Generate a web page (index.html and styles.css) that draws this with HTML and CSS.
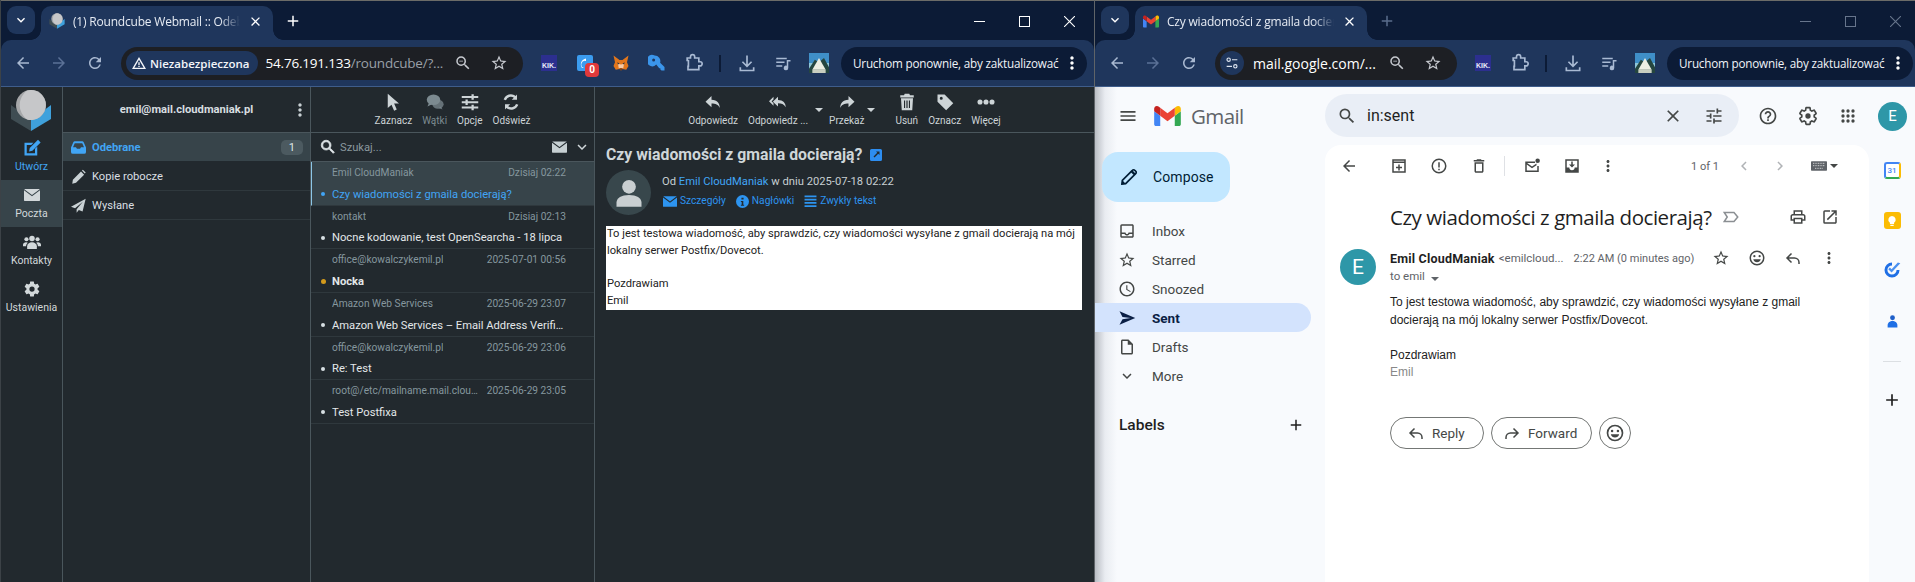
FILE: index.html
```html
<!DOCTYPE html>
<html lang="pl">
<head>
<meta charset="utf-8">
<title>Roundcube i Gmail</title>
<link rel="stylesheet" href="styles.css">
</head>
<body>
<svg class="defs" xmlns="http://www.w3.org/2000/svg">
  <symbol id="i-back" viewBox="0 0 24 24"><path d="M20 11H7.83l5.59-5.59L12 4l-8 8 8 8 1.41-1.41L7.83 13H20v-2z"/></symbol>
  <symbol id="i-fwd" viewBox="0 0 24 24"><path d="M4 11h12.17l-5.59-5.59L12 4l8 8-8 8-1.41-1.41L16.17 13H4v-2z"/></symbol>
  <symbol id="i-reload" viewBox="0 0 24 24"><path d="M17.65 6.35A7.958 7.958 0 0 0 12 4c-4.42 0-7.99 3.58-7.99 8s3.57 8 7.99 8c3.73 0 6.84-2.55 7.73-6h-2.08A5.99 5.99 0 0 1 12 18c-3.31 0-6-2.69-6-6s2.69-6 6-6c1.66 0 3.14.69 4.22 1.78L13 11h7V4l-2.35 2.35z"/></symbol>
  <symbol id="i-zoom" viewBox="0 0 24 24"><path d="M15.5 14h-.79l-.28-.27A6.471 6.471 0 0 0 16 9.5 6.5 6.5 0 1 0 9.5 16c1.61 0 3.09-.59 4.23-1.57l.27.28v.79l5 4.99L20.49 19l-4.99-5zm-6 0C7.01 14 5 11.99 5 9.5S7.01 5 9.5 5 14 7.01 14 9.5 11.99 14 9.5 14z"/><path d="M7 9h5v1H7z"/></symbol>
  <symbol id="i-search" viewBox="0 0 24 24"><path d="M15.5 14h-.79l-.28-.27A6.471 6.471 0 0 0 16 9.5 6.5 6.5 0 1 0 9.5 16c1.61 0 3.09-.59 4.23-1.57l.27.28v.79l5 4.99L20.49 19l-4.99-5zm-6 0C7.01 14 5 11.99 5 9.5S7.01 5 9.5 5 14 7.01 14 9.5 11.99 14 9.5 14z"/></symbol>
  <symbol id="i-star" viewBox="0 0 24 24"><path d="M22 9.24l-7.19-.62L12 2 9.19 8.63 2 9.24l5.46 4.73L5.82 21 12 17.27 18.18 21l-1.63-7.03L22 9.24zM12 15.4l-3.76 2.27 1-4.28-3.32-2.88 4.38-.38L12 6.1l1.71 4.04 4.38.38-3.32 2.88 1 4.28L12 15.4z"/></symbol>
  <symbol id="i-close" viewBox="0 0 24 24"><path d="M19 6.41 17.59 5 12 10.59 6.41 5 5 6.41 10.59 12 5 17.59 6.41 19 12 13.41 17.59 19 19 17.59 13.41 12z"/></symbol>
  <symbol id="i-more" viewBox="0 0 24 24"><path d="M12 8c1.1 0 2-.9 2-2s-.9-2-2-2-2 .9-2 2 .9 2 2 2zm0 2c-1.1 0-2 .9-2 2s.9 2 2 2 2-.9 2-2-.9-2-2-2zm0 6c-1.1 0-2 .9-2 2s.9 2 2 2 2-.9 2-2-.9-2-2-2z"/></symbol>
  <symbol id="i-chev" viewBox="0 0 24 24"><path d="M16.59 8.59 12 13.17 7.41 8.59 6 10l6 6 6-6z"/></symbol>
  <symbol id="i-add" viewBox="0 0 24 24"><path d="M19 13h-6v6h-2v-6H5v-2h6V5h2v6h6v2z"/></symbol>
  <symbol id="i-warn" viewBox="0 0 24 24"><path d="M12 3 1.5 21h21L12 3zm0 4 7 12H5l7-12zm-1 4v4h2v-4h-2zm0 5v2h2v-2h-2z"/></symbol>
  <symbol id="i-tunechip" viewBox="0 0 24 24"><circle cx="7" cy="7" r="2.500" fill="none" stroke="currentColor" stroke-width="1.700"/><path d="M12 6.200h8v1.700h-8zM4 16.200h8v1.700H4z"/><circle cx="17" cy="17" r="2.500" fill="none" stroke="currentColor" stroke-width="1.700"/></symbol>
  <symbol id="i-puzzle" viewBox="0 0 24 24"><path fill="none" stroke="currentColor" stroke-width="2" d="M5 6h4V4.500a2.500 2.500 0 0 1 5 0V6h5v4.500h1.500a2.500 2.500 0 0 1 0 5H19V20H6v-4h0.500l0-7H5z"/></symbol>
  <symbol id="i-download" viewBox="0 0 24 24"><path fill="none" stroke="currentColor" stroke-width="2" d="M12 3v13M6.500 10.500 12 16l5.500-5.500M4 17v4h16v-4"/></symbol>
  <symbol id="i-queue" viewBox="0 0 24 24"><path d="M3 5h14v2H3zM3 10h11v2H3zM3 15h8v2H3z"/><path d="M17 8h5v2h-3v8.500a3 3 0 1 1-2-2.800z"/></symbol>
  <symbol id="i-avatar" viewBox="0 0 24 24"><clipPath id="c-av"><circle cx="12" cy="12" r="12"/></clipPath><g clip-path="url(#c-av)"><rect width="24" height="24" fill="#3f8fc8"/><path d="M0 12h24v12H0z" fill="#8fc6d8"/><path d="M0 19 7 8l5 3 6-5 6 11v7H0z" fill="#25463f"/><path d="M12 6 20 20H4z" fill="#eceee2"/><path d="M4 20h16v4H4z" fill="#c9cfc0"/></g></symbol>
  <symbol id="i-fox" viewBox="0 0 24 24"><path d="M2 2 10 8h4l8-6-2 9 2 5-3 5-5-1-2 2-2-2-5 1-3-5 2-5z" fill="#e2761b"/><path d="M8 13 12 14l4-1-1 6h-6z" fill="#f6c9a5"/><path d="M7 11l3 1.500-2 1.500zM17 11l-3 1.500 2 1.500z" fill="#233447"/><path d="M10 19h4l-1 2.500h-2z" fill="#763d16"/></symbol>
  <symbol id="i-key" viewBox="0 0 24 24"><path fill-rule="evenodd" d="M9 2a7.500 7.500 0 0 1 7.200 9.500L22 17.300V22h-4l-1.500-1.500V19h-1.500l-4-5A7.500 7.500 0 1 1 9 2zM7.500 6a2 2 0 1 0 0 4 2 2 0 0 0 0-4z" fill="#3b95ea"/></symbol>
  <symbol id="r-reply" viewBox="0 0 24 24"><path d="M10 9V4L2 11.500 10 19v-5c5.500 0 9 1.500 11 6 0-6-3-11-11-11z"/></symbol>
  <symbol id="r-replyall" viewBox="0 0 28 24"><path d="M7 8V4L0 11l7 7v-4l-3-3zM14 9V4L6 11.500 14 19v-5c5.500 0 9 1.500 12 6 0-6-4-11-12-11z"/></symbol>
  <symbol id="r-fwd" viewBox="0 0 24 24"><path d="M14 9V4l8 7.500L14 19v-5C8.500 14 5 15.500 3 20c0-6 3-11 11-11z"/></symbol>
  <symbol id="r-trash" viewBox="0 0 24 24"><path d="M9 1h6l1 2h5v3H3V3h5zM4 7h16l-1 16H5zm4 3v10h1.500V10zm3.200 0v10h1.600V10zm3.300 0v10H16V10z"/></symbol>
  <symbol id="r-tag" viewBox="0 0 24 24"><path d="M2 2h9.500L23 13.500 13.500 23 2 11.500zM7 5a2 2 0 1 0 0 4 2 2 0 0 0 0-4z"/></symbol>
  <symbol id="r-dots" viewBox="0 0 24 24"><circle cx="4" cy="12" r="3.400"/><circle cx="12" cy="12" r="3.400"/><circle cx="20" cy="12" r="3.400"/></symbol>
  <symbol id="r-pointer" viewBox="0 0 24 24"><path d="M5 1v19l5-4.500 3.500 8 3.500-1.500-3.500-8H20z"/></symbol>
  <symbol id="r-chat" viewBox="0 0 24 24"><ellipse cx="10" cy="9" rx="9" ry="7"/><path d="M4 13 2 18l6-3z"/><ellipse cx="16" cy="15" rx="7.500" ry="6" opacity=".75"/><path d="M20 18l2 4-5-2z" opacity=".75"/></symbol>
  <symbol id="r-sliders" viewBox="0 0 24 24"><path d="M1 4h22v2.500H1zM1 11h22v2.500H1zM1 18h22v2.500H1z"/><path d="M14 1.500h3v7.500h-3zM6 8.500h3V16H6zM14 15.500h3V23h-3z"/></symbol>
  <symbol id="r-sync" viewBox="0 0 24 24"><path d="M20 2v7h-7l2.800-2.800A7 7 0 0 0 5.300 9.500L2.200 8.500a10.300 10.300 0 0 1 16-4.600zM4 22v-7h7l-2.800 2.800a7 7 0 0 0 10.500-3.300l3.100 1a10.300 10.300 0 0 1-16 4.600z"/></symbol>
  <symbol id="r-compose" viewBox="0 0 24 24"><path d="M2 5h12l-3 3H5v11h11v-6l3-3v12H2z"/><path d="M9 12 20 1l3.500 3.500-11 11L8 16.500z"/></symbol>
  <symbol id="r-mail" viewBox="0 0 24 18"><path d="M1 0h22a1 1 0 0 1 .6.200L12 9 .4.200A1 1 0 0 1 1 0z"/><path d="M0 2v15a1 1 0 0 0 1 1h22a1 1 0 0 0 1-1V2L12 11z"/></symbol>
  <symbol id="r-people" viewBox="0 0 26 20"><circle cx="13" cy="5" r="4"/><circle cx="5" cy="6" r="3"/><circle cx="21" cy="6" r="3"/><path d="M6 20v-4c0-3 3-5.500 7-5.500s7 2.500 7 5.500v4z"/><path d="M0 16v-2c0-2 2-3.500 4.500-3.500 1 0 2 .3 2.500.7C5.500 12.500 4.500 14 4.500 16zM26 16v-2c0-2-2-3.500-4.500-3.500-1 0-2 .3-2.500.7 1.500 1.300 2.500 2.800 2.500 4.800z"/></symbol>
  <symbol id="r-gear" viewBox="0 0 24 24"><path fill-rule="evenodd" d="M19.430 12.980c.04-.32.07-.64.07-.98s-.03-.66-.07-.98l2.110-1.650c.19-.15.24-.42.12-.64l-2-3.460c-.12-.22-.39-.3-.61-.22l-2.490 1c-.52-.4-1.080-.73-1.690-.98l-.38-2.650A.49.49 0 0 0 14 2h-4c-.25 0-.46.18-.49.42l-.38 2.650c-.61.25-1.170.59-1.690.98l-2.490-1c-.23-.09-.49 0-.61.22l-2 3.460c-.13.22-.07.49.12.64l2.110 1.650c-.04.32-.07.65-.07.98s.03.66.07.98l-2.110 1.650c-.19.15-.24.42-.12.64l2 3.460c.12.22.39.3.61.22l2.490-1c.52.4 1.080.73 1.690.98l.38 2.650c.03.24.24.42.49.42h4c.25 0 .46-.18.49-.42l.38-2.650c.61-.25 1.170-.59 1.690-.98l2.490 1c.23.09.49 0 .61-.22l2-3.460c.12-.22.07-.49-.12-.64zM12 15.500a3.500 3.500 0 1 1 0-7 3.500 3.500 0 0 1 0 7z"/></symbol>
  <symbol id="r-inbox" viewBox="0 0 24 20"><path d="M6 0h12c1 0 1.800.5 2.300 1.400L24 10v7a3 3 0 0 1-3 3H3a3 3 0 0 1-3-3v-7l3.700-8.600C4.200.5 5 0 6 0zm0 3-2.800 6.500H8l1.500 2.500h5L16 9.500h4.800L18 3z" fill-rule="evenodd"/></symbol>
  <symbol id="r-pencil" viewBox="0 0 24 24"><path d="M3 17 16 4l5 5L8 22l-6 1.500zM17.500 2.500 19 1l4.500 4.500L22 7z"/></symbol>
  <symbol id="r-plane" viewBox="0 0 24 24"><path d="M23.500 1 0 14l6.500 2.500L19 6 9 18v5.500l3.500-4.500 6 2.500z"/></symbol>
  <symbol id="r-person" viewBox="0 0 24 24"><circle cx="12" cy="7" r="5.500"/><path d="M2 23v-3.500C2 16 6 13.500 12 13.500s10 2.500 10 6V23z"/></symbol>
  <symbol id="r-info" viewBox="0 0 24 24"><path fill-rule="evenodd" d="M12 0a12 12 0 1 1 0 24 12 12 0 0 1 0-24zm-2 5v3.500h4V5zm-1 6v2h1.500v5H9v2h6v-2h-1.500v-7z"/></symbol>
  <symbol id="r-lines" viewBox="0 0 24 24"><path d="M1 1h22v3H1zM1 7h22v3H1zM1 13h22v3H1zM1 19h22v3H1z"/></symbol>
  <symbol id="r-ext" viewBox="0 0 24 24"><path fill-rule="evenodd" d="M3 0h18a3 3 0 0 1 3 3v18a3 3 0 0 1-3 3H3a3 3 0 0 1-3-3V3a3 3 0 0 1 3-3zm9 5 2.500 2.500L7 15l2 2 7.500-7.500L19 12V5z"/></symbol>
  <symbol id="g-menu" viewBox="0 0 24 24"><path d="M3 18h18v-2H3v2zm0-5h18v-2H3v2zm0-7v2h18V6H3z"/></symbol>
  <symbol id="g-tune" viewBox="0 0 24 24"><path d="M3 17v2h6v-2H3zM3 5v2h10V5H3zm10 16v-2h8v-2h-8v-2h-2v6h2zM7 9v2H3v2h4v2h2V9H7zm14 4v-2H11v2h10zm-6-4h2V7h4V5h-4V3h-2v6z"/></symbol>
  <symbol id="g-help" viewBox="0 0 24 24"><path d="M11 18h2v-2h-2v2zm1-16C6.480 2 2 6.480 2 12s4.480 10 10 10 10-4.480 10-10S17.520 2 12 2zm0 18c-4.410 0-8-3.590-8-8s3.590-8 8-8 8 3.590 8 8-3.590 8-8 8zm0-14c-2.210 0-4 1.790-4 4h2c0-1.100.9-2 2-2s2 .9 2 2c0 2-3 1.750-3 5h2c0-2.250 3-2.500 3-5 0-2.210-1.790-4-4-4z"/></symbol>
  <symbol id="g-gear" viewBox="0 0 24 24"><path fill="none" stroke="currentColor" stroke-width="2" d="M19.430 12.980c.04-.32.07-.64.07-.98s-.03-.66-.07-.98l2.110-1.650c.19-.15.24-.42.12-.64l-2-3.460c-.12-.22-.39-.3-.61-.22l-2.490 1c-.52-.4-1.080-.73-1.690-.98l-.38-2.650A.49.49 0 0 0 14 2h-4c-.25 0-.46.18-.49.42l-.38 2.650c-.61.25-1.170.59-1.690.98l-2.490-1c-.23-.09-.49 0-.61.22l-2 3.460c-.13.22-.07.49.12.64l2.110 1.650c-.04.32-.07.65-.07.98s.03.66.07.98l-2.110 1.650c-.19.15-.24.42-.12.64l2 3.460c.12.22.39.3.61.22l2.490-1c.52.4 1.080.73 1.690.98l.38 2.650c.03.24.24.42.49.42h4c.25 0 .46-.18.49-.42l.38-2.650c.61-.25 1.170-.59 1.690-.98l2.490 1c.23.09.49 0 .61-.22l2-3.460c.12-.22.07-.49-.12-.64z"/><circle cx="12" cy="12" r="3.200"/></symbol>
  <symbol id="g-grid" viewBox="0 0 24 24"><path d="M6 8a2 2 0 1 0 0-4 2 2 0 0 0 0 4zm6 12a2 2 0 1 0 0-4 2 2 0 0 0 0 4zm-6 0a2 2 0 1 0 0-4 2 2 0 0 0 0 4zm0-6a2 2 0 1 0 0-4 2 2 0 0 0 0 4zm6 0a2 2 0 1 0 0-4 2 2 0 0 0 0 4zm4-8a2 2 0 1 0 4 0 2 2 0 0 0-4 0zm-4 2a2 2 0 1 0 0-4 2 2 0 0 0 0 4zm6 6a2 2 0 1 0 0-4 2 2 0 0 0 0 4zm0 6a2 2 0 1 0 0-4 2 2 0 0 0 0 4z"/></symbol>
  <symbol id="g-edit" viewBox="0 0 24 24"><path fill="none" stroke="currentColor" stroke-width="2" d="M3.500 20.500 4 16 16 4a2 2 0 0 1 3 0l1 1a2 2 0 0 1 0 3L8 20z"/><path d="M14 6l4 4 2-2-4-4z"/><path d="M3 21l1-5 4 4z"/></symbol>
  <symbol id="g-inbox" viewBox="0 0 24 24"><path d="M19 3H5a2 2 0 0 0-2 2v14c0 1.100.9 2 2 2h14c1.100 0 2-.9 2-2V5c0-1.100-.9-2-2-2zm0 16H5v-3h3.560c.69 1.190 1.970 2 3.450 2s2.750-.81 3.450-2H19v3zm0-5h-4.990c0 1.100-.9 2-2 2s-2-.9-2-2H5V5h14v9z"/></symbol>
  <symbol id="g-clock" viewBox="0 0 24 24"><path d="M11.990 2C6.470 2 2 6.480 2 12s4.470 10 9.990 10C17.520 22 22 17.520 22 12S17.520 2 11.990 2zM12 20c-4.420 0-8-3.580-8-8s3.580-8 8-8 8 3.580 8 8-3.580 8-8 8zm.5-13H11v6l5.250 3.150.75-1.230-4.500-2.670z"/></symbol>
  <symbol id="g-send" viewBox="0 0 24 24"><path d="M2.010 21 23 12 2.010 3 6 10.500 17 12 6 13.500z"/></symbol>
  <symbol id="g-draft" viewBox="0 0 24 24"><path d="M14 2H6c-1.100 0-2 .9-2 2v16c0 1.100.9 2 2 2h12c1.100 0 2-.9 2-2V8l-6-6zm4 18H6V4h7v5h5v11z"/></symbol>
  <symbol id="g-archive" viewBox="0 0 24 24"><path d="M3 3h18v18H3zm2 5v11h14V8zm0-3v1h14V5zm6 5h2v3h3v2h-3v3h-2v-3H8v-2h3z" fill-rule="evenodd"/></symbol>
  <symbol id="g-spam" viewBox="0 0 24 24"><path d="M12 2a10 10 0 1 1 0 20 10 10 0 0 1 0-20zm0 2a8 8 0 1 0 0 16 8 8 0 0 0 0-16zm-1 3h2v7h-2zm0 8.500h2v2h-2z" fill-rule="evenodd"/></symbol>
  <symbol id="g-delete" viewBox="0 0 24 24"><path d="M6 19c0 1.100.9 2 2 2h8c1.100 0 2-.9 2-2V7H6v12zM8 9h8v10H8V9zm7.500-5-1-1h-5l-1 1H5v2h14V4h-3.500z"/></symbol>
  <symbol id="g-unread" viewBox="0 0 24 24"><path d="M3 6h13v2H5.500l6.500 4.500 6-4v2.400l-6 4-7-4.800V18h14v-6h2v8H3z"/><circle cx="19.500" cy="5" r="3"/></symbol>
  <symbol id="g-move" viewBox="0 0 24 24"><path d="M3 3h18v18H3zm2 2v9h3.500a3.500 3.500 0 0 0 7 0H19V5zm6 1h2v4h3l-4 4-4-4h3z" fill-rule="evenodd"/></symbol>
  <symbol id="g-left" viewBox="0 0 24 24"><path d="M15.410 7.410 14 6l-6 6 6 6 1.410-1.410L10.830 12z"/></symbol>
  <symbol id="g-right" viewBox="0 0 24 24"><path d="M8.590 16.590 10 18l6-6-6-6-1.410 1.410L13.170 12z"/></symbol>
  <symbol id="g-kbd" viewBox="0 0 24 14"><path d="M1 0h22a1 1 0 0 1 1 1v12a1 1 0 0 1-1 1H1a1 1 0 0 1-1-1V1a1 1 0 0 1 1-1z"/><path d="M3 3h18M3 6.500h18M6 10.500h12" stroke="#ffffff" stroke-width="1" stroke-dasharray="1.500 1"/></symbol>
  <symbol id="g-label" viewBox="0 0 24 24"><path fill="none" stroke="currentColor" stroke-width="2" d="M3 6h13l5 6-5 6H3l4-6z"/></symbol>
  <symbol id="g-print" viewBox="0 0 24 24"><path d="M19 8h-1V3H6v5H5c-1.660 0-3 1.340-3 3v6h4v4h12v-4h4v-6c0-1.660-1.340-3-3-3zM8 5h8v3H8V5zm8 12v2H8v-4h8v2zm2-2v-2H6v2H4v-4c0-.55.45-1 1-1h14c.55 0 1 .45 1 1v4h-2z"/></symbol>
  <symbol id="g-open" viewBox="0 0 24 24"><path d="M19 19H5V5h7V3H5a2 2 0 0 0-2 2v14a2 2 0 0 0 2 2h14c1.100 0 2-.9 2-2v-7h-2v7zM14 3v2h3.590l-9.830 9.830 1.410 1.410L19 6.410V10h2V3h-7z"/></symbol>
  <symbol id="g-smile" viewBox="0 0 24 24"><path fill-rule="evenodd" d="M12 2a10 10 0 1 1 0 20 10 10 0 0 1 0-20zm0 2a8 8 0 1 0 0 16 8 8 0 0 0 0-16zM8.500 8a1.500 1.500 0 1 1 0 3 1.500 1.500 0 0 1 0-3zm7 0a1.500 1.500 0 1 1 0 3 1.500 1.500 0 0 1 0-3zM7 13.500h10c-.6 2.500-2.600 4-5 4s-4.400-1.500-5-4z"/></symbol>
  <symbol id="g-reply" viewBox="0 0 24 24"><path fill="none" stroke="currentColor" stroke-width="2" d="M10 6 4 12l6 6M4.500 12H14a6 6 0 0 1 6 6v2"/></symbol>
  <symbol id="g-forward" viewBox="0 0 24 24"><path fill="none" stroke="currentColor" stroke-width="2" d="M14 6l6 6-6 6M19.500 12H10a6 6 0 0 0-6 6v2"/></symbol>
  <symbol id="rc-mark" viewBox="0 0 42 41"><path d="M1 15 21 30V41L1 29z" fill="#3f4d53"/><path d="M41 15 21 30V41L41 29z" fill="#3fa1dc"/><circle cx="21" cy="15" r="15" fill="#a5a7a9"/><path d="M17 .5A15 15 0 1 1 17 29.500 18 18 0 0 1 17 .5z" fill="#c6c7c9"/></symbol>
</svg>

<div class="desk">
  <section class="win win-left">
    <header class="chrome">
      <div class="tabstrip">
        <button class="tabsearch"><svg class="ic12"><use href="#i-chev"/></svg></button>
        <div class="tab">
          <svg class="favicon"><use href="#rc-mark"/></svg>
          <span class="tab-title">(1) Roundcube Webmail :: Odebrane</span>
          <svg class="ic14 tab-x"><use href="#i-close"/></svg>
        </div>
        <svg class="ic18 newtab"><use href="#i-add"/></svg>
        <div class="winctl">
          <span class="wc-min"></span><span class="wc-max"></span><svg class="wc-x" viewBox="0 0 10 10"><path d="M0 0l10 10M10 0 0 10"/></svg>
        </div>
      </div>
      <div class="toolbar">
        <span class="navbtn"><svg class="ic18"><use href="#i-back"/></svg></span>
        <span class="navbtn dim"><svg class="ic18"><use href="#i-fwd"/></svg></span>
        <span class="navbtn"><svg class="ic18"><use href="#i-reload"/></svg></span>
        <div class="omni omni-left">
          <span class="chip"><svg class="ic16"><use href="#i-warn"/></svg>Niezabezpieczona</span>
          <span class="url">54.76.191.133<em>/roundcube/?...</em></span>
          <svg class="ic18 omni-i"><use href="#i-zoom"/></svg>
          <svg class="ic18 omni-i"><use href="#i-star"/></svg>
        </div>
        <span class="ext first"><span class="kik">KIK.</span></span>
        <span class="ext"><span class="bluebox"><svg viewBox="0 0 16 16"><path d="M5 13a6 6 0 0 1 4-9.500v2.500a3.500 3.500 0 0 0-2 7z" fill="#fff"/></svg></span><span class="badge">0</span></span>
        <span class="ext"><svg class="ic18"><use href="#i-fox"/></svg></span>
        <span class="ext"><svg class="ic18"><use href="#i-key"/></svg></span>
        <span class="ext"><svg class="ic20"><use href="#i-puzzle"/></svg></span>
        <span class="tsep"></span>
        <span class="ext"><svg class="ic20"><use href="#i-download"/></svg></span>
        <span class="ext"><svg class="ic18"><use href="#i-queue"/></svg></span>
        <span class="ext avatar"><svg class="ic20b"><use href="#i-avatar"/></svg></span>
        <span class="update"><span>Uruchom ponownie, aby zaktualizować</span><svg class="ic20"><use href="#i-more"/></svg></span>
      </div>
    </header>

    <div class="rc">
      <nav class="rail">
        <div class="rc-logo">
          <svg><use href="#rc-mark"/></svg>
        </div>
        <a class="rail-item blue"><svg class="ic18"><use href="#r-compose"/></svg><span>Utwórz</span></a>
        <a class="rail-item on"><svg class="r-env"><use href="#r-mail"/></svg><span>Poczta</span></a>
        <a class="rail-item"><svg class="r-ppl"><use href="#r-people"/></svg><span>Kontakty</span></a>
        <a class="rail-item"><svg class="ic18"><use href="#r-gear"/></svg><span>Ustawienia</span></a>
      </nav>

      <aside class="folders">
        <div class="folders-head"><strong>emil@mail.cloudmaniak.pl</strong><svg class="ic18 fh-more"><use href="#i-more"/></svg></div>
        <ul class="flist">
          <li class="selected"><svg class="f-ic"><use href="#r-inbox"/></svg><span>Odebrane</span><b class="count">1</b></li>
          <li><svg class="f-ic"><use href="#r-pencil"/></svg><span>Kopie robocze</span></li>
          <li><svg class="f-ic"><use href="#r-plane"/></svg><span>Wysłane</span></li>
        </ul>
      </aside>

      <section class="mlist">
        <div class="rtools">
          <span class="tool"><svg class="ic18"><use href="#r-pointer"/></svg>Zaznacz</span>
          <span class="tool off"><svg class="ic18"><use href="#r-chat"/></svg>Wątki</span>
          <span class="tool"><svg class="ic18"><use href="#r-sliders"/></svg>Opcje</span>
          <span class="tool"><svg class="ic18"><use href="#r-sync"/></svg>Odśwież</span>
        </div>
        <div class="msearch">
          <svg class="ic18 ms-i"><use href="#i-search"/></svg>
          <span class="ms-ph">Szukaj...</span>
          <svg class="ms-env"><use href="#r-mail"/></svg>
          <svg class="ic18 ms-chev"><use href="#i-chev"/></svg>
        </div>
        <article class="mrow active">
          <div class="m1"><span class="from">Emil CloudManiak</span><time>Dzisiaj 02:22</time></div>
          <div class="m2"><i class="dot"></i><span class="subj">Czy wiadomości z gmaila docierają?</span></div>
        </article>
        <article class="mrow">
          <div class="m1"><span class="from">kontakt</span><time>Dzisiaj 02:13</time></div>
          <div class="m2"><i class="dot"></i><span class="subj">Nocne kodowanie, test OpenSearcha - 18 lipca</span></div>
        </article>
        <article class="mrow unread">
          <div class="m1"><span class="from">office@kowalczykemil.pl</span><time>2025-07-01 00:56</time></div>
          <div class="m2"><i class="dot amber"></i><span class="subj">Nocka</span></div>
        </article>
        <article class="mrow">
          <div class="m1"><span class="from">Amazon Web Services</span><time>2025-06-29 23:07</time></div>
          <div class="m2"><i class="dot"></i><span class="subj">Amazon Web Services – Email Address Verification Request</span></div>
        </article>
        <article class="mrow">
          <div class="m1"><span class="from">office@kowalczykemil.pl</span><time>2025-06-29 23:06</time></div>
          <div class="m2"><i class="dot"></i><span class="subj">Re: Test</span></div>
        </article>
        <article class="mrow">
          <div class="m1"><span class="from">root@/etc/mailname.mail.cloudmaniak.pl</span><time>2025-06-29 23:05</time></div>
          <div class="m2"><i class="dot"></i><span class="subj">Test Postfixa</span></div>
        </article>
      </section>

      <main class="reader">
        <div class="rtools rtools-msg">
          <span class="tool"><svg class="ic18"><use href="#r-reply"/></svg>Odpowiedz</span>
          <span class="tool drop d1"><svg class="ic18"><use href="#r-replyall"/></svg>Odpowiedz ...<i class="caret"></i></span>
          <span class="tool drop d2"><svg class="ic18"><use href="#r-fwd"/></svg>Przekaż<i class="caret"></i></span>
          <span class="tool"><svg class="ic18"><use href="#r-trash"/></svg>Usuń</span>
          <span class="tool"><svg class="ic18"><use href="#r-tag"/></svg>Oznacz</span>
          <span class="tool"><svg class="ic18"><use href="#r-dots"/></svg>Więcej</span>
        </div>
        <div class="msg">
          <h1 class="msg-subj">Czy wiadomości z gmaila docierają? <svg class="ext-link"><use href="#r-ext"/></svg></h1>
          <div class="msg-head">
            <span class="msg-av"><svg class="ic26"><use href="#r-person"/></svg></span>
            <div class="msg-meta">
              <div class="msg-from">Od <a>Emil CloudManiak</a> w dniu 2025-07-18 02:22</div>
              <div class="msg-links">
                <a><svg class="l-env"><use href="#r-mail"/></svg>Szczegóły</a>
                <a><svg class="l-ic"><use href="#r-info"/></svg>Nagłówki</a>
                <a><svg class="l-ic"><use href="#r-lines"/></svg>Zwykły tekst</a>
              </div>
            </div>
          </div>
          <div class="msg-body">To jest testowa wiadomość, aby sprawdzić, czy wiadomości wysyłane z gmail docierają na mój<br>lokalny serwer Postfix/Dovecot.<br><br>Pozdrawiam<br>Emil</div>
        </div>
      </main>
    </div>
  </section>

  <section class="win win-right">
    <header class="chrome">
      <div class="tabstrip">
        <button class="tabsearch"><svg class="ic12"><use href="#i-chev"/></svg></button>
        <div class="tab">
          <svg class="favicon gm-fav" viewBox="52 42 88 66"><path fill="#4285f4" d="M58 108h14V74L52 59v43c0 3.320 2.690 6 6 6"/><path fill="#34a853" d="M120 108h14c3.320 0 6-2.690 6-6V59l-20 15"/><path fill="#fbbc04" d="M120 48v26l20-15v-8c0-7.420-8.470-11.650-14.400-7.200"/><path fill="#ea4335" d="M72 74V48l24 18 24-18v26L96 92"/><path fill="#c5221f" d="M52 51v8l20 15V48l-5.600-4.200c-5.940-4.450-14.400-.22-14.400 7.200"/></svg>
          <span class="tab-title">Czy wiadomości z gmaila docierają? - emil</span>
          <svg class="ic14 tab-x"><use href="#i-close"/></svg>
        </div>
        <svg class="ic18 newtab faded"><use href="#i-add"/></svg>
        <div class="winctl faded">
          <span class="wc-min"></span><span class="wc-max"></span><svg class="wc-x" viewBox="0 0 10 10"><path d="M0 0l10 10M10 0 0 10"/></svg>
        </div>
      </div>
      <div class="toolbar">
        <span class="navbtn"><svg class="ic18"><use href="#i-back"/></svg></span>
        <span class="navbtn dim"><svg class="ic18"><use href="#i-fwd"/></svg></span>
        <span class="navbtn"><svg class="ic18"><use href="#i-reload"/></svg></span>
        <div class="omni omni-right">
          <span class="chip chip-round"><svg class="ic16"><use href="#i-tunechip"/></svg></span>
          <span class="url url-g">mail.google.com/...</span>
          <svg class="ic18 omni-i"><use href="#i-zoom"/></svg>
          <svg class="ic18 omni-i"><use href="#i-star"/></svg>
        </div>
        <span class="ext first"><span class="kik">KIK.</span></span>
        <span class="ext"><svg class="ic20"><use href="#i-puzzle"/></svg></span>
        <span class="tsep"></span>
        <span class="ext"><svg class="ic20"><use href="#i-download"/></svg></span>
        <span class="ext"><svg class="ic18"><use href="#i-queue"/></svg></span>
        <span class="ext avatar"><svg class="ic20b"><use href="#i-avatar"/></svg></span>
        <span class="update"><span>Uruchom ponownie, aby zaktualizować</span><svg class="ic20"><use href="#i-more"/></svg></span>
      </div>
    </header>

    <div class="gm">
      <div class="gm-head">
        <div class="gm-brand">
          <svg class="g20"><use href="#g-menu"/></svg>
          <svg class="gm-logo" viewBox="52 42 88 66"><path fill="#4285f4" d="M58 108h14V74L52 59v43c0 3.320 2.690 6 6 6"/><path fill="#34a853" d="M120 108h14c3.320 0 6-2.690 6-6V59l-20 15"/><path fill="#fbbc04" d="M120 48v26l20-15v-8c0-7.420-8.470-11.650-14.400-7.200"/><path fill="#ea4335" d="M72 74V48l24 18 24-18v26L96 92"/><path fill="#c5221f" d="M52 51v8l20 15V48l-5.600-4.200c-5.940-4.450-14.400-.22-14.400 7.200"/></svg>
          <span class="gm-word">Gmail</span>
        </div>
        <div class="gm-search">
          <svg class="g20"><use href="#i-search"/></svg>
          <span class="gm-q">in:sent</span>
          <svg class="g20 gm-sx"><use href="#i-close"/></svg>
          <svg class="g20 gm-st"><use href="#g-tune"/></svg>
        </div>
        <div class="gm-actions">
          <svg class="g20"><use href="#g-help"/></svg>
          <svg class="g20"><use href="#g-gear"/></svg>
          <svg class="g20"><use href="#g-grid"/></svg>
          <span class="gm-me">E</span>
        </div>
      </div>
      <div class="gm-body">
        <aside class="gm-nav">
          <button class="compose"><svg class="g20 cp-i"><use href="#g-edit"/></svg>Compose</button>
          <ul class="gm-list">
            <li><svg class="g18"><use href="#g-inbox"/></svg>Inbox</li>
            <li><svg class="g18"><use href="#i-star"/></svg>Starred</li>
            <li><svg class="g18"><use href="#g-clock"/></svg>Snoozed</li>
            <li class="cur"><svg class="g18"><use href="#g-send"/></svg>Sent</li>
            <li><svg class="g18"><use href="#g-draft"/></svg>Drafts</li>
            <li><svg class="g18"><use href="#i-chev"/></svg>More</li>
          </ul>
          <div class="gm-labels"><span>Labels</span><svg class="g18"><use href="#i-add"/></svg></div>
        </aside>

        <main class="gm-card">
          <div class="gm-tools">
            <svg class="g18 t-back"><use href="#i-back"/></svg>
            <svg class="g18 t-gap"><use href="#g-archive"/></svg>
            <svg class="g18 t-step"><use href="#g-spam"/></svg>
            <svg class="g18 t-step"><use href="#g-delete"/></svg>
            <span class="t-sep"></span>
            <svg class="g18 t-after"><use href="#g-unread"/></svg>
            <svg class="g18 t-step"><use href="#g-move"/></svg>
            <svg class="g18 t-more"><use href="#i-more"/></svg>
            <span class="t-count">1 of 1</span>
            <svg class="g18 t-pg"><use href="#g-left"/></svg>
            <svg class="g18 t-pg2"><use href="#g-right"/></svg>
            <svg class="t-kbd"><use href="#g-kbd"/></svg>
            <i class="t-caret"></i>
          </div>
          <div class="gm-subject">
            <h2>Czy wiadomości z gmaila docierają?</h2>
            <svg class="g18 s-label"><use href="#g-label"/></svg>
            <svg class="g18 s-print"><use href="#g-print"/></svg>
            <svg class="g18 s-open"><use href="#g-open"/></svg>
          </div>
          <div class="gm-msg">
            <span class="gm-av">E</span>
            <div class="gm-content">
              <div class="gm-line1">
                <strong>Emil CloudManiak</strong>
                <span class="gm-addr">&lt;emilcloud...</span>
                <span class="gm-time">2:22 AM (0 minutes ago)</span>
                <svg class="g18 l-star"><use href="#i-star"/></svg>
                <svg class="g18 l-step"><use href="#g-smile"/></svg>
                <svg class="g18 l-step"><use href="#g-reply"/></svg>
                <svg class="g18 l-step"><use href="#i-more"/></svg>
              </div>
              <div class="gm-to">to emil<i class="t-caret small"></i></div>
              <div class="gm-text">To jest testowa wiadomość, aby sprawdzić, czy wiadomości wysyłane z gmail<br>docierają na mój lokalny serwer Postfix/Dovecot.<br><br>Pozdrawiam<br><span class="gm-sig">Emil</span></div>
              <div class="gm-btns">
                <button class="pill p-reply"><svg class="g18"><use href="#g-reply"/></svg>Reply</button>
                <button class="pill p-fwd"><svg class="g18"><use href="#g-forward"/></svg>Forward</button>
                <button class="pill p-emoji"><svg class="g20"><use href="#g-smile"/></svg></button>
              </div>
            </div>
          </div>
        </main>

        <aside class="gm-apps">
          <span class="app cal"><b>31</b></span>
          <span class="app keep"><svg viewBox="0 0 12 14"><path d="M6 1a4.500 4.500 0 0 1 2.500 8.200V10.500h-5V9.200A4.500 4.500 0 0 1 6 1zM4 11.500h4V13H4z" fill="#fff"/></svg></span>
          <svg class="app-svg tasks" viewBox="0 0 24 24"><path d="M12 3a9 9 0 1 0 9 9h-3.500A5.500 5.500 0 1 1 12 6.500z" fill="#1f6fe5"/><path d="M7.500 11 11.500 15 22 4l-3-1-7.500 8-2-2z" fill="#4a90f0"/></svg>
          <svg class="app-svg people" viewBox="0 0 16 16"><circle cx="8" cy="4" r="3" fill="#1f5fc9"/><path d="M2 16v-3c0-3 3-5 6-5s6 2 6 5v3z" fill="#1f6fe5"/></svg>
          <span class="apps-sep"></span>
          <svg class="g20 apps-add"><use href="#i-add"/></svg>
        </aside>
      </div>
    </div>
  </section>
</div>
</body>
</html>
```

FILE: styles.css
```css
* { box-sizing: border-box; }
html, body { margin: 0; padding: 0; }
body { width: 1915px; height: 582px; overflow: hidden; background: #22292e; font-family: Roboto, "Liberation Sans", sans-serif; }
svg { fill: currentColor; display: block; flex: none; }
.defs { display: none; }
ul { list-style: none; margin: 0; padding: 0; }
button { font: inherit; border: 0; padding: 0; background: none; color: inherit; }
a { color: inherit; }
h1, h2 { margin: 0; }

.ic12 { width: 16px; height: 16px; }
.ic14 { width: 15px; height: 15px; }
.ic16 { width: 16px; height: 16px; }
.ic18 { width: 18px; height: 18px; }
.ic20 { width: 20px; height: 20px; }
.ic20b { width: 20px; height: 20px; }
.ic26 { width: 30px; height: 30px; }
.g18 { width: 18px; height: 18px; }
.g20 { width: 20px; height: 20px; }

.desk { display: flex; width: 1915px; height: 582px; }
.win { display: flex; flex-direction: column; height: 582px; }
.win-left { width: 1095px; border-right: 1px solid #5f6468; border-left: 1px solid #3c4247; }
.win-right { width: 820px; }

/* Browser frame */
.chrome { background: #0c1b36; border-top: 1px solid #6c6c68; height: 87px; border-bottom: 1px solid #3f5d8b; color: #e6ebf3; flex: none; }
.tabstrip { height: 39px; display: flex; align-items: flex-start; padding: 5px 0 0 6px; }
.tabsearch { width: 28px; height: 28px; border-radius: 9px; background: #1f365c; display: flex; align-items: center; justify-content: center; color: #fff; }
.tab { position: relative; width: 232px; height: 34px; margin-left: 6px; background: #1f365c; border-radius: 10px 10px 0 0; display: flex; align-items: center; padding: 0 10px 4px 8px; font: 12px "Open Sans", "Noto Sans", sans-serif; color: #e6ebf3; }
.tab::after { content: ""; position: absolute; right: -10px; bottom: 0; width: 10px; height: 10px; background: radial-gradient(circle at 100% 0, transparent 9.500px, #1f365c 10px); }
.tab::before { content: ""; position: absolute; left: -10px; bottom: 0; width: 10px; height: 10px; background: radial-gradient(circle at 0 0, transparent 9.500px, #1f365c 10px); }
.favicon { width: 16px; height: 16px; }
.gm-fav { height: 13px; }
.tab-title { flex: 1; margin-left: 8px; white-space: nowrap; overflow: hidden; -webkit-mask-image: linear-gradient(90deg, #000 88%, transparent); mask-image: linear-gradient(90deg, #000 88%, transparent); letter-spacing: -.2px; }
.tab-x { margin-left: 8px; color: #fff; }
.newtab { margin: 6px 0 0 11px; color: #fff; }
.newtab.faded { color: #5a6d8c; }
.winctl { margin-left: auto; display: flex; align-items: center; height: 30px; gap: 34px; padding-right: 19px; color: #fff; }
.win-right .winctl { gap: 34px; padding-right: 14px; color: #67758c; }
.wc-min { width: 11px; height: 1px; background: currentColor; }
.wc-max { width: 11px; height: 11px; border: 1px solid currentColor; }
.wc-x { width: 11px; height: 11px; fill: none; stroke: currentColor; stroke-width: 1; }

.toolbar { height: 46px; background: #1f365c; border-radius: 10px 10px 0 0; display: flex; align-items: center; padding-left: 4px; }
.navbtn { width: 36px; display: flex; justify-content: center; color: #a9b9d1; }
.navbtn.dim { color: #5b7196; }
.omni { height: 33px; margin-left: 8px; background: #1d1f24; border-radius: 17px; display: flex; align-items: center; padding-left: 5px; flex: none; }
.omni-left { width: 402px; }
.omni-right { width: 242px; }
.chip { height: 24px; padding: 0 8px 0 5px; border-radius: 12px; background: #1f365c; display: flex; align-items: center; gap: 3px; font: 600 11.500px "Open Sans", sans-serif; color: #f3f5f9; white-space: nowrap; }
.chip-round { width: 24px; padding: 0 4px; justify-content: center; color: #dfe6f0; }
.url { font: 13.500px "Open Sans", sans-serif; margin-left: 8px; color: #fff; white-space: nowrap; letter-spacing: -.2px; flex: 1; }
.url em { font-style: normal; color: #9aa0a8; }
.url-g { font-size: 14px; letter-spacing: 0; margin-left: 9px; }
.omni-i { color: #c6c9cf; margin-right: 18px; }
.omni-left .omni-i:last-child, .omni-right .omni-i:last-child { margin-right: 15px; }
.ext { position: relative; width: 36px; height: 24px; display: flex; align-items: center; justify-content: center; color: #a9bad3; flex: none; }
.ext.first { margin-left: 8px; }
.kik { width: 16px; height: 16px; padding-top: 7px; background: #2c2f8f; color: #e8ebf8; font: 700 7px/8px "Liberation Sans", sans-serif; text-align: center; overflow: hidden; }
.bluebox { width: 16px; height: 16px; border-radius: 2px; background: #3b9cf0; margin-top: -1px; }
.badge { position: absolute; right: 4px; bottom: -2px; width: 14px; height: 14px; border-radius: 4px; background: #e0393b; color: #fff; font: 700 10px/14px Roboto, sans-serif; text-align: center; }
.tsep { width: 2px; height: 17px; background: #0c1b36; margin: 0 8px; }
.update { margin-left: 5px; width: 246px; height: 33px; border-radius: 17px; background: #0c1b36; color: #f0f3f8; display: flex; align-items: center; padding-left: 12px; font: 11.700px "Open Sans", sans-serif; white-space: nowrap; letter-spacing: -.2px; }
.update svg { margin-left: auto; margin-right: 5px; color: #fff; }
.avatar { width: 34px; margin-left: 1px; }

/* Roundcube */
.rc { flex: 1; min-height: 0; display: flex; background: #22292e; color: #dfe5e8; font-size: 11.200px; }
.rail { width: 62px; border-right: 1px solid #4a565c; flex: none; }
.rc-logo { height: 46px; padding: 3px 0 0 9px; }
.rc-logo svg { width: 42px; height: 41px; }
.rail-item { height: 47px; display: flex; flex-direction: column; align-items: center; padding-top: 6px; color: #d2d8da; font-size: 10.500px; }
.rail-item svg { height: 18px; }
.rail-item span { margin-top: 3px; line-height: 14px; white-space: nowrap; }
.rail-item.blue { color: #41a5f5; }
.rail-item.on { background: #37444a; }
.r-env { width: 16px; height: 18px; }
.r-ppl { width: 18px; height: 18px; }

.folders { width: 248px; border-right: 1px solid #4a565c; flex: none; }
.folders-head { height: 46px; border-bottom: 1px solid #4a565c; display: flex; align-items: center; justify-content: center; position: relative; font-size: 11.200px; color: #d8dee0; }
.fh-more { position: absolute; right: 0; top: 13px; width: 20px; height: 20px; color: #c8d0d3; }
.flist li { height: 29px; border-bottom: 1px solid #2f383d; display: flex; align-items: center; padding: 1px 7px 0 8px; font-size: 11.200px; color: #d9dfe2; }
.flist li.selected { background: #37444a; color: #41a5f5; font-weight: 700; border-bottom-color: #37444a; height: 28px; margin-bottom: 1px; }
.f-ic { width: 15px; height: 15px; margin-right: 6px; color: #c9d1d4; }
.selected .f-ic { color: #41a5f5; }
.count { margin-left: auto; width: 22px; height: 15px; border-radius: 5px; background: #4c5a60; color: #dfe5e8; text-align: center; font: 400 11.200px/15px Roboto, sans-serif; }

.mlist { width: 284px; border-right: 1px solid #4a565c; flex: none; }
.rtools { height: 46px; border-bottom: 1px solid #4a565c; display: flex; justify-content: center; gap: 10px; padding-top: 6px; }
.tool { position: relative; display: flex; flex-direction: column; align-items: center; font-size: 10px; line-height: 14px; color: #cdd4d7; white-space: nowrap; }
.tool svg { margin-bottom: 3px; }
.tool.off { color: #7c8a90; }
.drop.d1 { margin-right: 11px; }
.drop.d2 { margin-right: 21px; }
.caret { position: absolute; right: -15px; top: 15px; width: 0; height: 0; border: 4px solid transparent; border-top-color: #cdd4d7; }
.d2 .caret { right: -11px; }
.msearch { height: 29px; border-bottom: 1px solid #4a565c; display: flex; align-items: center; padding: 0 3px 0 8px; }
.ms-i { color: #dfe5e8; stroke: currentColor; stroke-width: 1; }
.ms-ph { margin-left: 3px; color: #8a989e; font-size: 11.200px; }
.ms-env { width: 15px; height: 12px; margin-left: auto; color: #c6cfd2; }
.ms-chev { margin-left: 6px; color: #d0d7da; }
.mrow { height: 43.700px; border-bottom: 1px solid #2f383d; padding: 0 28px 0 0; }
.mrow.active { background: #37444a; border-left: 1px solid #8cc6e6; }
.m1 { height: 21px; display: flex; align-items: center; justify-content: space-between; gap: 6px; padding-left: 21px; font-size: 10.200px; color: #85979e; }
.active .m1 { padding-left: 20px; }
.from { white-space: nowrap; overflow: hidden; text-overflow: ellipsis; }
.m1 time { white-space: nowrap; flex: none; }
.m2 { height: 22px; display: flex; align-items: center; font-size: 11.200px; color: #e3e7e9; }
.dot { width: 4px; height: 4px; border-radius: 50%; background: #d8e0e4; margin: 0 7px 0 10px; flex: none; }
.active .dot { background: #41a5f5; margin-left: 9px; }
.dot.amber { width: 5px; height: 5px; background: #d39a1c; margin-right: 6px; }
.subj { white-space: nowrap; overflow: hidden; text-overflow: ellipsis; }
.active .subj { color: #41a5f5; }
.unread .subj { font-weight: 700; }

.reader { flex: 1; min-width: 0; }
.msg { padding: 10px 12px 0 11px; }
.msg-subj { font-size: 15.800px; line-height: 24px; font-weight: 700; color: #cfd6d9; display: flex; align-items: center; gap: 4px; white-space: pre; }
.ext-link { width: 12px; height: 12px; color: #2d8df0; }
.msg-head { display: flex; margin-top: 3px; }
.msg-av { width: 45px; height: 45px; border-radius: 50%; background: #38474c; display: flex; justify-content: center; align-items: center; color: #c9cfd1; }
.msg-meta { margin-left: 11px; }
.msg-from { font-size: 11.200px; height: 19px; line-height: 24px; color: #c7cfd2; }
.msg-from a { color: #41a5f5; }
.msg-links { display: flex; gap: 10px; margin-top: 4px; margin-left: 1px; font-size: 10.200px; line-height: 16px; color: #2d94f0; align-items: center; }
.msg-links a { display: flex; align-items: center; gap: 3px; white-space: nowrap; }
.l-env { width: 14px; height: 11px; }
.l-ic { width: 13px; height: 13px; }
.msg-body { margin-top: 11px; background: #fff; color: #222; font-size: 11.150px; line-height: 16.800px; height: 84px; padding-left: 1px; white-space: nowrap; }

/* Gmail */
.gm { flex: 1; min-height: 0; display: flex; flex-direction: column; background: linear-gradient(90deg, #b9bdc4 0, #e9ecf1 10px, #f8fafd 22px); color: #1f1f1f; font-family: Roboto, "Liberation Sans", sans-serif; }
.gm-head { height: 58px; display: flex; padding-top: 7px; flex: none; }
.gm-brand { width: 230px; display: flex; align-items: center; height: 44px; padding-left: 23px; color: #444746; }
.gm-logo { width: 27px; height: 20px; margin-left: 16px; }
.gm-word { margin-left: 10px; font: 20.500px "Open Sans", sans-serif; color: #5f6368; letter-spacing: -.6px; }
.gm-search { width: 414px; height: 43px; border-radius: 22px; background: #e9eef6; display: flex; align-items: center; padding-left: 12px; color: #444746; }
.gm-q { margin-left: 10px; font-size: 16px; color: #1f1f1f; }
.gm-sx { margin-left: auto; }
.gm-st { margin: 0 15px 0 21px; }
.gm-actions { display: flex; align-items: center; height: 44px; padding-left: 19px; color: #444746; gap: 20px; }
.gm-me { width: 29px; height: 29px; border-radius: 50%; background: #2e97a8; color: #fff; font: 15px/29px Roboto, sans-serif; text-align: center; }
.gm-body { flex: 1; min-height: 0; display: flex; }
.gm-nav { width: 230px; flex: none; padding-top: 7px; }
.compose { width: 128px; height: 50px; margin-left: 7px; border-radius: 16px; background: #c2e7ff; display: flex; align-items: center; padding-left: 17px; font-size: 14px; color: #001d35; letter-spacing: .1px; }
.cp-i { margin-right: 14px; }
.gm-list { margin-top: 14px; width: 216px; }
.gm-list li { height: 29px; display: flex; align-items: center; gap: 16px; padding-left: 23px; font-size: 13.500px; color: #444746; border-radius: 0 15px 15px 0; }
.gm-list li.cur { background: #d3e3fd; color: #0b1f45; font-weight: 700; }
.gm-labels { display: flex; align-items: center; justify-content: space-between; width: 210px; padding-left: 24px; margin-top: 25px; height: 20px; font-size: 15.500px; font-weight: 500; color: #1f1f1f; }
.gm-card { width: 544px; flex: none; background: #fff; border-radius: 16px 16px 0 0; color: #222; }
.gm-tools { display: flex; align-items: center; height: 42px; color: #444746; }
.t-back { margin-left: 15px; }
.t-gap { margin-left: 32px; }
.t-step { margin-left: 22px; }
.t-sep { width: 1px; height: 20px; background: #dfe1e5; margin-left: 16px; }
.t-after { margin-left: 18px; }
.t-more { margin-left: 18px; }
.t-count { margin-left: 74px; font-size: 11px; color: #5f6368; white-space: nowrap; }
.t-pg { margin-left: 16px; color: #b0b3b6; }
.t-pg2 { margin-left: 18px; color: #b0b3b6; }
.t-kbd { margin-left: 22px; width: 16px; height: 10px; color: #5f6368; }
.t-caret { display: inline-block; width: 0; height: 0; border: 4px solid transparent; border-top-color: #444746; margin: 4px 0 0 3px; }
.t-caret.small { border-top-color: #5f6368; margin: 6px 0 -2px 6px; vertical-align: middle; }
.gm-subject { display: flex; align-items: center; height: 40px; padding-left: 65px; margin-top: 10px; margin-bottom: 1px; color: #444746; }
.gm-subject h2 { font: 400 20.500px "Open Sans", sans-serif; color: #1f1f1f; letter-spacing: -.45px; white-space: nowrap; }
.s-label { margin-left: 10px; color: #8b8f93; }
.s-print { margin-left: 49px; }
.s-open { margin-left: 14px; }
.gm-msg { display: flex; padding: 11px 0 0 15px; }
.gm-av { width: 36px; height: 36px; border-radius: 50%; background: #2e97a8; color: #fff; font: 21px/36px Roboto, sans-serif; text-align: center; flex: none; }
.gm-content { margin-left: 14px; width: 470px; }
.gm-line1 { display: flex; align-items: center; height: 18px; white-space: nowrap; color: #444746; }
.gm-line1 strong { font-size: 12.500px; color: #1f1f1f; letter-spacing: .2px; }
.gm-addr { margin-left: 4px; font-size: 11.500px; color: #5f6368; }
.gm-time { margin-left: 10px; font-size: 11px; color: #5f6368; }
.l-star { margin-left: 18px; }
.l-step { margin-left: 18px; }
.gm-to { font-size: 11.500px; color: #5f6368; line-height: 18px; }
.gm-text { margin-top: 9px; font: 12px/17.500px "Liberation Sans", Arial, sans-serif; color: #222; }
.gm-sig { color: #888; }
.gm-btns { display: flex; gap: 7px; margin-top: 35px; }
.pill { height: 32px; border: 1px solid #747775; border-radius: 16px; display: flex; align-items: center; gap: 7px; font-size: 13.500px; color: #444746; background: #fff; }
.p-reply { width: 94px; padding-left: 16px; }
.p-fwd { width: 101px; padding-left: 11px; }
.p-emoji { width: 32px; justify-content: center; }
.gm-apps { flex: 1; display: flex; flex-direction: column; align-items: center; padding-top: 17px; color: #444746; }
.app { width: 17px; height: 17px; border-radius: 3px; flex: none; }
.cal { background: #fff; border: 2px solid #4285f4; border-right-color: #fbbc04; border-bottom-color: #34a853; color: #4285f4; font-size: 8px; line-height: 13px; text-align: center; }
.cal b { font-weight: 500; }
.keep { background: #fbbc04; margin-top: 33px; display: flex; justify-content: center; align-items: center; }
.keep svg { width: 10px; height: 12px; }
.app-svg { width: 20px; height: 20px; margin-top: 31px; }
.app-svg.people { width: 13px; height: 16px; margin-top: 33px; }
.apps-sep { width: 18px; height: 1px; background: #dcdfe3; margin-top: 32px; }
.apps-add { margin-top: 28px; color: #1f1f1f; }
```
